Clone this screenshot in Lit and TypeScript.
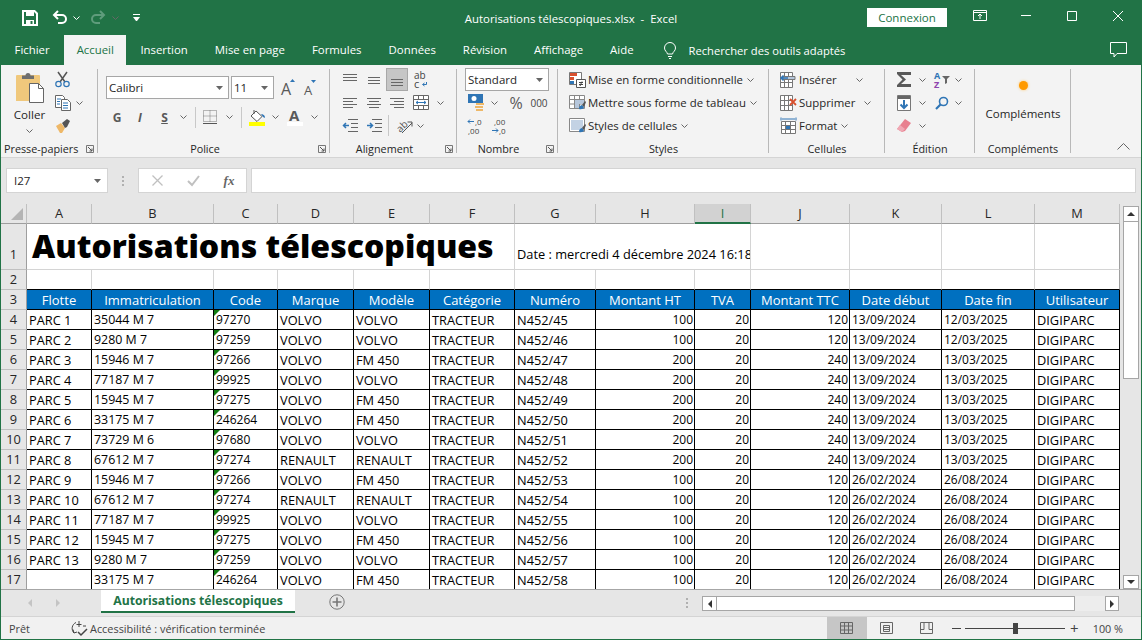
import { LitElement, html, css, svg } from 'lit';
import { customElement } from 'lit/decorators.js';

const caret = html`<svg class="ico" width="7" height="4" viewBox="0 0 7 4"><path d="M.5.5l3 3 3-3" fill="none" stroke="#666"/></svg>`;
const drop = html`<svg class="ico" width="7" height="4" viewBox="0 0 7 4"><path d="M0 0h7L3.5 4z" fill="#666"/></svg>`;
const launcher = html`<svg class="launch" width="8" height="8" viewBox="0 0 8 8"><path d="M.5 7.5v-7h7v7z" fill="none" stroke="#777"/><path d="M2 2l4 4M6 3.5V6H3.5" fill="none" stroke="#555"/></svg>`;

const lines = (ys: number[][]) => html`<svg class="ico" width="16" height="14" viewBox="0 0 16 14">
    ${ys.map(([y, a, b]) => svg`<path d="M${a} ${y + 0.5}H${b}" stroke="#666"/>`)}
</svg>`;

const gridIcon = (accent: unknown) => html`<svg class="ico" width="17" height="17" viewBox="0 0 17 17">
    <path d="M.5 1.500h12v15H.5zM.5 6.500h12M.5 11.500h12M4.500 1.500v15M8.500 1.500v15" fill="#fff" stroke="#777"/>${accent}
</svg>`;

const saveIcon = html`<svg class="ico" width="16" height="16" viewBox="0 0 16 16"><path d="M1 1h11.500L15 3.500V15H1z" fill="none" stroke="#fff" stroke-width="2"/><path d="M4 1h8v5H4zM4 10h8v5H4z" fill="#fff"/><path d="M8.500 11h2v3h-2z" fill="#217346"/></svg>`;
const undoIcon = (c: string) => html`<svg class="ico" width="16" height="15" viewBox="0 0 16 15"><path d="M6 1L2 5l4 4M2 5h8a4 4 0 0 1 0 8H6" fill="none" stroke="${c}" stroke-width="2"/></svg>`;
const redoIcon = (c: string) => html`<svg class="ico" width="16" height="15" viewBox="0 0 16 15"><path d="M10 1l4 4-4 4M14 5H6a4 4 0 0 0 0 8h4" fill="none" stroke="${c}" stroke-width="2"/></svg>`;

const clipboard = html`<svg class="ico" width="29" height="31" viewBox="0 0 29 31">
    <path d="M2 3h22a1 1 0 0 1 1 1v25H1V4a1 1 0 0 1 1-1z" fill="#f0c87c"/>
    <path d="M7 7V3.500h3.500a2.500 2.500 0 0 1 5 0H19V7z" fill="#6e6e6e"/>
    <path d="M14.500 11.500h9l5 5v14h-14z" fill="#fff" stroke="#666"/><path d="M23.500 11.500v5h5" fill="none" stroke="#666"/>
</svg>`;
const scissors = html`<svg class="ico" width="15" height="17" viewBox="0 0 15 17">
    <path d="M3 1l7 10M12 1L5 11" stroke="#555" stroke-width="1.500"/>
    <circle cx="3.500" cy="13" r="2.700" fill="none" stroke="#2f75b5" stroke-width="1.200"/><circle cx="11.500" cy="13" r="2.700" fill="none" stroke="#2f75b5" stroke-width="1.200"/>
</svg>`;
const copyIcon = html`<svg class="ico" width="16" height="16" viewBox="0 0 16 16">
    <path d="M.5.5h7l2 2v10h-9z" fill="#fff" stroke="#666"/><path d="M6.500 4.500h6l3 3v8h-9z" fill="#fff" stroke="#666"/>
    <path d="M2 4h4M2 6.500h3M2 9h3M8 8h5M8 10.500h5M8 13h5" stroke="#2f75b5"/>
</svg>`;
const brush = html`<svg class="ico" width="16" height="15" viewBox="0 0 16 15">
    <path d="M1 8l5-3 4 5-3 5H5z" fill="#eeb868"/><path d="M7 5l5-4 3 2-3 6-2 1z" fill="#555"/>
</svg>`;
const growIcon = html`<svg class="ico" width="15" height="18" viewBox="0 0 15 18"><path d="M9 3h5L11.500 0z" fill="#2f75b5"/><text x="0" y="16" font-size="16" fill="#595959" font-family="Open Sans">A</text></svg>`;
const shrinkIcon = html`<svg class="ico" width="14" height="16" viewBox="0 0 14 16"><path d="M7 0h5L9.500 3z" fill="#2f75b5"/><text x="0" y="15" font-size="13" fill="#595959" font-family="Open Sans">A</text></svg>`;
const bordersIcon = html`<svg class="ico" width="14" height="14" viewBox="0 0 14 14"><path d="M.5.5h13v11H.5zM7 .5v11M.5 6h13" fill="none" stroke="#777" stroke-dasharray="1 1"/><path d="M0 13.500h14" stroke="#555"/></svg>`;
const fillIcon = html`<svg class="ico" width="17" height="17" viewBox="0 0 17 17">
    <path d="M7 2l6 5.500-5 5-6-5.500z" fill="#fff" stroke="#555"/><path d="M5 1v4" stroke="#555"/><path d="M12 5c2 0 4 1 4 4l-2-1z" fill="#2f75b5"/>
    <path d="M0 13h16v4H0z" fill="#ffff00"/>
</svg>`;
const colorIcon = html`<svg class="ico" width="16" height="17" viewBox="0 0 16 17"><text x="2" y="12" font-size="15" font-weight="700" fill="#595959" font-family="Open Sans">A</text><path d="M0 13h16v4H0z" fill="#fff"/></svg>`;
const wrapIcon = html`<svg class="ico" width="14" height="18" viewBox="0 0 14 18"><text x="0" y="8" font-size="10" fill="#444" font-family="Open Sans">ab</text><text x="0" y="17" font-size="11" fill="#444" font-family="Open Sans">c</text><path d="M12.500 11v2.500H9M10.500 12l-2 1.500 2 1.500" fill="none" stroke="#2f75b5"/></svg>`;
const mergeIcon = html`<svg class="ico" width="16" height="15" viewBox="0 0 16 15"><path d="M.5.5h15v14H.5zM.5 4.500h15M.5 10.500h15M5.500.5v4M10.500.5v4M5.500 10.500v4M10.500 10.500v4" fill="#fff" stroke="#666"/><path d="M3 7.500h10M5 6l-2 1.500L5 9M11 6l2 1.500L11 9" fill="none" stroke="#2f75b5"/></svg>`;
const outdentIcon = html`<svg class="ico" width="16" height="14" viewBox="0 0 16 14"><path d="M6 .5h10M9 4.500h7M9 8.500h7M6 12.500h10" stroke="#666"/><path d="M7 6.500H2M4 4L1.500 6.500 4 9" fill="none" stroke="#2f75b5" stroke-width="1.500"/></svg>`;
const indentIcon = html`<svg class="ico" width="16" height="14" viewBox="0 0 16 14"><path d="M6 .5h10M9 4.500h7M9 8.500h7M6 12.500h10" stroke="#666"/><path d="M1 6.500h5M4 4l2.500 2.500L4 9" fill="none" stroke="#2f75b5" stroke-width="1.500"/></svg>`;
const orientIcon = html`<svg class="ico" width="17" height="16" viewBox="0 0 17 16"><text x="1" y="13" font-size="10" fill="#555" font-family="Open Sans" transform="rotate(-45 5 10)">ab</text><path d="M6 15L16 5M11.500 4H16v4.500" fill="none" stroke="#555"/></svg>`;
const currencyIcon = html`<svg class="ico" width="17" height="17" viewBox="0 0 17 17">
    <path d="M0 0h15v9H0z" fill="#2f75b5"/><circle cx="6" cy="4.500" r="2.500" fill="#fff"/>
    <path d="M8 9h8v2H8zM7 12h8v2H7zM8 15h7v2H8z" fill="#eeb868"/>
</svg>`;
const incDecimals = html`<svg class="ico" width="16" height="16" viewBox="0 0 16 16"><path d="M7 3.500H1M3 1.500l-2 2 2 2" fill="none" stroke="#2f75b5"/><text x="8" y="7" font-size="8" fill="#444" font-family="Open Sans">,0</text><text x="1" y="15.500" font-size="8" fill="#444" font-family="Open Sans">,00</text></svg>`;
const decDecimals = html`<svg class="ico" width="16" height="16" viewBox="0 0 16 16"><text x="3" y="7" font-size="8" fill="#444" font-family="Open Sans">,00</text><path d="M1 12.500h6M5 10.500l2 2-2 2" fill="none" stroke="#2f75b5"/><text x="8" y="15.500" font-size="8" fill="#444" font-family="Open Sans">,0</text></svg>`;

const condIcon = html`<svg class="ico" width="17" height="16" viewBox="0 0 17 16">
    <path d="M.5.500h12v12H.5z" fill="#fff" stroke="#777"/><path d="M1 1h7v3H1z" fill="#d9502e"/><path d="M1 5h4v3H1z" fill="#d9502e"/><path d="M1 9h4v3H1z" fill="#2f75b5"/>
    <path d="M7.500 7.500h9v8h-9z" fill="#fff" stroke="#555"/><path d="M10 10.500h4M10 12.500h4M13 9.500l-2 4.500" fill="none" stroke="#444"/>
</svg>`;
const brushMark = svg`<path d="M10 14c0-3 2-4 3-4l2 2c0 1-2 3-5 2z" fill="#2f75b5"/><path d="M13 10l3-4 1 1-2 5z" fill="#555"/>`;
const tableIcon = html`<svg class="ico" width="17" height="16" viewBox="0 0 17 16">
    <path d="M.5.500h15v13H.5zM.5 4.500h15M.5 9h15M5.500.5v13M10.500.5v13" fill="#fff" stroke="#888"/><path d="M6 5h9v4H6zM6 9h4v4H6z" fill="#b6c7dc"/>${brushMark}
</svg>`;
const cellStyleIcon = html`<svg class="ico" width="17" height="16" viewBox="0 0 17 16">
    <path d="M.5.500h15v13H.5z" fill="#fff" stroke="#888"/><path d="M2 2h12v10H2z" fill="#c3d2e4"/>${brushMark}
</svg>`;
const insertCells = gridIcon(svg`<path d="M3 5.500h12v3H3z" fill="#b6c7dc" stroke="#777"/><path d="M8 7H1M3.500 4.500L1 7l2.500 2.500" fill="none" stroke="#2f75b5" stroke-width="1.500"/>`);
const deleteCells = gridIcon(svg`<path d="M10 5l6 6M16 5l-6 6" stroke="#d9502e" stroke-width="1.800"/>`);
const formatCells = html`<svg class="ico" width="17" height="17" viewBox="0 0 17 17">
    <path d="M1.500 4.500h14v12h-14zM1.500 8.500h14M1.500 12.500h14M5.500 4.500v12M10.500 4.500v12" fill="#fff" stroke="#777"/><path d="M6 9h4v3H6z" fill="#2f75b5"/>
    <path d="M1 .5v3M16 .5v3M2 2h13" stroke="#2f75b5"/>
</svg>`;
const sigma = html`<svg class="ico" width="16" height="15" viewBox="0 0 16 15"><path d="M1 0h14v3L5 3l5 4.500L5 12h10v3H1v-2l5.500-5.500L1 2z" fill="#595959"/></svg>`;
const sortIcon = html`<svg class="ico" width="16" height="18" viewBox="0 0 16 18"><text x="0" y="8" font-size="9" font-weight="700" fill="#2f75b5" font-family="Open Sans">A</text><text x="0" y="17" font-size="9" font-weight="700" fill="#8e44ad" font-family="Open Sans">Z</text><path d="M8 5h8l-3 3v4l-2 1V8z" fill="#666"/></svg>`;
const downFill = html`<svg class="ico" width="14" height="16" viewBox="0 0 14 16"><path d="M.5.500h13v15H.5z" fill="#fff" stroke="#777"/><path d="M1 1h12v3H1z" fill="#666"/><path d="M7 5v8M3.500 9.500L7 13l3.500-3.500" fill="none" stroke="#2f75b5" stroke-width="2"/></svg>`;
const searchIcon = html`<svg class="ico" width="14" height="14" viewBox="0 0 14 14"><circle cx="8.500" cy="5.500" r="4" fill="none" stroke="#2f75b5" stroke-width="1.600"/><path d="M5.500 8.500L1 13" stroke="#2f75b5" stroke-width="2.200"/></svg>`;
const eraser = html`<svg class="ico" width="14" height="13" viewBox="0 0 14 13"><path d="M8 0l6 4-6 8-3 1-5-3z" fill="#e8808f"/><path d="M0 10l3-4 5 4-3 3z" fill="#f0a8b4"/></svg>`;

const bulb = html`<svg class="ico" width="14" height="17" viewBox="0 0 14 17"><path d="M4.500 12C4 9.500 1.500 9 1.500 6a5.500 5.500 0 0 1 11 0c0 3-2.500 3.500-3 6zM5 14.500h4M6 16.500h2" fill="none" stroke="#fff"/></svg>`;
const comment = html`<svg class="ico" width="17" height="16" viewBox="0 0 17 16"><path d="M.5.500h16v11H7L4 15v-3.500H.5z" fill="none" stroke="#fff"/></svg>`;
const restore = html`<svg class="ico" width="14" height="11" viewBox="0 0 14 11"><path d="M.5.500h13v10H.5zM.5 2.500h13" fill="none" stroke="#fff"/><path d="M7 9V4M5 6l2-2 2 2" fill="none" stroke="#fff"/></svg>`;
const minimize = html`<svg class="ico" width="10" height="1" viewBox="0 0 10 1"><path d="M0 .5h10" stroke="#fff"/></svg>`;
const maximize = html`<svg class="ico" width="10" height="10" viewBox="0 0 10 10"><path d="M.5.500h9v9h-9z" fill="none" stroke="#fff"/></svg>`;
const closeIcon = html`<svg class="ico" width="10" height="10" viewBox="0 0 10 10"><path d="M0 0l10 10M10 0L0 10" stroke="#fff"/></svg>`;
const cross = html`<svg class="ico" width="11" height="11" viewBox="0 0 11 11"><path d="M.5.5l10 10M10.500.5l-10 10" stroke="#c0c0c0" stroke-width="1.300"/></svg>`;
const check = html`<svg class="ico" width="13" height="11" viewBox="0 0 13 11"><path d="M1 6l4 4 7-9" fill="none" stroke="#c0c0c0" stroke-width="2"/></svg>`;
const plusCircle = html`<svg class="ico" width="16" height="16" viewBox="0 0 16 16"><circle cx="8" cy="8" r="7.200" fill="none" stroke="#777"/><path d="M8 3.500v9M3.500 8h9" stroke="#777" stroke-width="1.600"/></svg>`;
const a11y = html`<svg class="ico" width="17" height="17" viewBox="0 0 17 17"><path d="M5 2.500A6.500 6.500 0 0 0 3 13M2 9.500L3 13l3-1" fill="none" stroke="#444"/><path d="M8 1v6M5.500 4.500h5M12 6l3 0" stroke="#444"/><path d="M7 12l3 3 6-6" fill="none" stroke="#444" stroke-width="1.500"/></svg>`;
const normalView = html`<svg class="ico" width="13" height="12" viewBox="0 0 13 12"><path d="M.5.500h12v11H.5zM.5 4h12M.5 8h12M4.500.5v11M8.500.5v11" fill="none" stroke="#666"/></svg>`;
const pageView = html`<svg class="ico" width="13" height="12" viewBox="0 0 13 12"><path d="M.5.500h12v11H.5z" fill="none" stroke="#666"/><path d="M3.500 3.500h6v6h-6zM4 5.500h5M4 7.500h5" fill="none" stroke="#666"/></svg>`;
const breakView = html`<svg class="ico" width="13" height="12" viewBox="0 0 13 12"><path d="M.5.500h12v11H.5zM.5 7.500h3.500V.5M9 .5v7h3.500" fill="none" stroke="#666"/></svg>`;

const COLS = ['A', 'B', 'C', 'D', 'E', 'F', 'G', 'H', 'I', 'J', 'K', 'L', 'M'];
const HEAD = ['Flotte', 'Immatriculation', 'Code', 'Marque', 'Modèle', 'Catégorie', 'Numéro', 'Montant HT', 'TVA', 'Montant TTC', 'Date début', 'Date fin', 'Utilisateur'];
const A = ['13/09/2024', '12/03/2025'];
const B = ['13/09/2024', '13/03/2025'];
const C = ['26/02/2024', '26/08/2024'];
// flotte, immat, code, marque, modele, ht, ttc, dates
const ROWS: [string, string, string, string, string, number, number, string[]][] = [
    ['PARC 1', '35044 M 7', '97270', 'VOLVO', 'VOLVO', 100, 120, A],
    ['PARC 2', '9280 M 7', '97259', 'VOLVO', 'VOLVO', 100, 120, A],
    ['PARC 3', '15946 M 7', '97266', 'VOLVO', 'FM 450', 200, 240, B],
    ['PARC 4', '77187 M 7', '99925', 'VOLVO', 'VOLVO', 200, 240, B],
    ['PARC 5', '15945 M 7', '97275', 'VOLVO', 'FM 450', 200, 240, B],
    ['PARC 6', '33175 M 7', '246264', 'VOLVO', 'FM 450', 200, 240, B],
    ['PARC 7', '73729 M 6', '97680', 'VOLVO', 'VOLVO', 200, 240, B],
    ['PARC 8', '67612 M 7', '97274', 'RENAULT', 'RENAULT', 200, 240, B],
    ['PARC 9', '15946 M 7', '97266', 'VOLVO', 'FM 450', 100, 120, C],
    ['PARC 10', '67612 M 7', '97274', 'RENAULT', 'RENAULT', 100, 120, C],
    ['PARC 11', '77187 M 7', '99925', 'VOLVO', 'VOLVO', 100, 120, C],
    ['PARC 12', '15945 M 7', '97275', 'VOLVO', 'FM 450', 100, 120, C],
    ['PARC 13', '9280 M 7', '97259', 'VOLVO', 'VOLVO', 100, 120, C],
    ['', '33175 M 7', '246264', 'VOLVO', 'FM 450', 100, 120, C],
];

@customElement('app-root')
export class AppRoot extends LitElement {
    static override styles = css`
        :host {
            display: block;
            width: 1142px;
            height: 640px;
            overflow: hidden;
            font-family: 'Open Sans', 'Liberation Sans', sans-serif;
            color: #262626;
        }
        .app {
            box-sizing: border-box;
            width: 1142px;
            height: 640px;
            border: 1px solid #217346;
            border-top: 0;
            background: #e6e6e6;
            display: flex;
            flex-direction: column;
        }
        .ico {
            display: block;
            flex: none;
            overflow: visible;
        }

        .titlebar {
            height: 35px;
            background: #217346;
            color: #fff;
            display: grid;
            grid-template-columns: 1fr auto 1fr;
            align-items: center;
            font-size: 11.4px;
        }
        .qat {
            display: grid;
            grid-template-columns: 16px 14px 16px 16px 28px 6px 36px;
            justify-items: center;
            align-items: center;
            padding-left: 21px;
        }
        .qat .wcaret path {
            stroke: #fff;
        }
        .custom {
            width: 7px;
            height: 7px;
            border-top: 1px solid #fff;
            box-sizing: border-box;
        }
        .custom::after {
            content: '';
            display: block;
            margin-top: 2px;
            border: 3.5px solid transparent;
            border-top: 4px solid #fff;
            border-bottom: 0;
        }
        .title {
            white-space: pre;
            padding-top: 1px;
        }
        .win {
            display: flex;
            justify-content: flex-end;
            align-items: center;
        }
        .login {
            width: 80px;
            height: 19px;
            background: #fff;
            color: #217346;
            font-size: 11.5px;
            line-height: 19px;
            text-align: center;
            margin-right: 10px;
        }
        .wbtn {
            width: 46px;
            height: 35px;
            display: flex;
            align-items: center;
            justify-content: center;
            padding-bottom: 4px;
            box-sizing: border-box;
        }

        .tabs {
            height: 30px;
            background: #217346;
            color: #fff;
            display: flex;
            align-items: stretch;
            font-size: 11.4px;
        }
        .tab {
            padding: 0 13.5px;
            line-height: 30px;
            white-space: nowrap;
        }
        .tab.on {
            background: #f3f3f3;
            color: #217346;
            padding: 0 12.5px;
            margin: 0 0.5px 0 1px;
        }
        .tell {
            display: flex;
            align-items: center;
            gap: 12px;
            margin-left: 15.5px;
            white-space: nowrap;
            font-size: 11.2px;
        }
        .feedback {
            margin-left: auto;
            padding-right: 14px;
            align-self: center;
        }

        .ribbon {
            height: 93px;
            box-sizing: border-box;
            background: #f3f3f3;
            border-bottom: 1px solid #d4d4d4;
            display: flex;
            padding-top: 3px;
            font-size: 11.4px;
        }
        .group {
            position: relative;
            box-sizing: border-box;
            height: 88px;
            flex: none;
            display: flex;
            flex-direction: column;
        }
        .group::after {
            content: '';
            position: absolute;
            right: 0;
            top: 1px;
            bottom: 3px;
            width: 1px;
            background: #b8b8b8;
        }
        .body {
            height: 73px;
        }
        .glabel {
            position: relative;
            box-sizing: border-box;
            height: 15px;
            line-height: 15px;
            text-align: center;
            font-size: 10.8px;
        }
        .glabel.tool {
            padding-right: 18px;
        }
        .launch {
            position: absolute;
            right: 4px;
            top: 4px;
        }
        .g-clip { width: 97px; }
        .g-font { width: 232px; }
        .g-align { width: 127px; }
        .g-num { width: 101px; }
        .g-styles { width: 211px; }
        .g-cells { width: 116px; }
        .g-edit { width: 90px; }
        .g-addin { width: 96px; }
        .g-clip .glabel {
            text-align: left;
            padding-left: 3px;
        }

        .g-clip .body {
            display: grid;
            grid-template-columns: 52px 44px;
        }
        .paste {
            display: flex;
            flex-direction: column;
            align-items: center;
            padding: 4px 0 0 5px;
        }
        .paste span {
            margin-top: 3px;
            line-height: 18px;
            font-size: 11.6px;
        }
        .paste .ico:last-child {
            margin-top: 5px;
        }
        .stack {
            display: grid;
            grid-auto-rows: 23px;
            align-items: center;
        }
        .clip-row {
            display: flex;
            align-items: center;
            gap: 5px;
            padding-left: 2px;
        }

        .font-top {
            display: grid;
            grid-template-columns: 123px 45px 28px 18px;
            align-items: center;
            justify-items: center;
            margin: 8px 0 0 8px;
        }
        .box {
            box-sizing: border-box;
            height: 23px;
            background: #fff;
            border: 1px solid #a6a6a6;
            display: flex;
            align-items: center;
            justify-content: space-between;
            padding: 0 5px 0 2px;
            font-size: 11.5px;
            width: 100%;
        }
        .box.size {
            width: 43px;
            justify-self: end;
        }
        .font-bottom {
            display: grid;
            grid-template-columns: 22px 24px 25px 12px 12px 18px 20px 4px 28px 8px 32px 6px;
            align-items: center;
            justify-items: center;
            height: 22px;
            margin: 7px 0 0 8px;
        }
        .glyph {
            font-size: 12px;
            font-weight: 700;
            color: #595959;
        }
        .glyph.it {
            font-style: italic;
        }
        .glyph.ul {
            text-decoration: underline;
        }
        .vsep {
            width: 1px;
            height: 21px;
            background: #c8c8c8;
        }

        .g-align .body,
        .g-num .body,
        .g-edit .body {
            display: grid;
            grid-auto-rows: 23px;
        }
        .a-row {
            display: grid;
            grid-template-columns: 24px 23px 24px 24px 14px;
            align-items: center;
            justify-items: center;
            padding-left: 8px;
        }
        .a-row.third {
            grid-template-columns: 24px 23px 6px 26px 6px;
        }
        .pressed {
            width: 22px;
            height: 23px;
            box-sizing: border-box;
            background: #c6c6c6;
            border: 1px solid #a8a8a8;
            display: flex;
            align-items: center;
            justify-content: center;
        }

        .num-box {
            width: 84px;
            margin-left: 8px;
            font-size: 11.5px;
        }
        .n-row {
            display: grid;
            grid-template-columns: 22px 14px 30px 16px;
            align-items: center;
            justify-items: center;
            padding-left: 8px;
        }
        .n-row.third {
            grid-template-columns: 20px 28px;
        }
        .percent {
            font-size: 16px;
            color: #595959;
        }
        .thousands {
            font-size: 10px;
            color: #444;
        }

        .list {
            display: grid;
            grid-auto-rows: 23px;
            padding: 0 0 0 11px;
        }
        .list-row {
            display: flex;
            align-items: center;
            white-space: nowrap;
        }
        .list-row span {
            margin: 0 4px 0 2px;
        }
        .g-cells .c-ins span { margin-right: 19px; }
        .g-cells .c-del span { margin-right: 9px; }

        .e-row {
            display: grid;
            grid-template-columns: 22px 14px 26px 6px;
            align-items: center;
            justify-items: center;
            padding-left: 8px;
        }

        .g-addin .body {
            display: flex;
            flex-direction: column;
            align-items: center;
            padding-top: 13px;
            box-sizing: border-box;
        }
        .dot {
            width: 9px;
            height: 9px;
            border-radius: 50%;
            background: #ff9a00;
            box-shadow: 0 0 3px #ffc870;
        }
        .g-addin .body span {
            margin-top: 16px;
            line-height: 16px;
            font-size: 11.5px;
        }
        .collapse {
            flex: 1;
            display: flex;
            justify-content: flex-end;
            align-items: flex-end;
            padding: 0 11px 7px 0;
        }

        .fbar {
            height: 46px;
            box-sizing: border-box;
            display: flex;
            align-items: flex-start;
            padding: 10px 5px 0 5px;
            font-size: 11.5px;
        }
        .namebox {
            box-sizing: border-box;
            width: 102px;
            height: 25px;
            background: #fff;
            border: 1px solid #d4d4d4;
            display: flex;
            align-items: center;
            justify-content: space-between;
            padding: 0 6px 0 7px;
        }
        .grip {
            width: 30px;
            height: 25px;
            display: flex;
            flex-direction: column;
            align-items: center;
            justify-content: center;
            gap: 2px;
        }
        .grip i {
            width: 2px;
            height: 2px;
            background: #b0b0b0;
        }
        .fbtns {
            box-sizing: border-box;
            width: 109px;
            height: 25px;
            background: #fff;
            border: 1px solid #d4d4d4;
            display: grid;
            grid-template-columns: 36px 36px 36px;
            align-items: center;
            justify-items: center;
            margin-right: 4px;
        }
        .fx {
            font-family: 'Liberation Serif', serif;
            font-style: italic;
            font-size: 13px;
            font-weight: 700;
            color: #666;
        }
        .finput {
            flex: 1;
            height: 25px;
            box-sizing: border-box;
            background: #fff;
            border: 1px solid #d4d4d4;
        }

        .main {
            height: 385px;
            display: flex;
            overflow: hidden;
        }
        .sheet {
            display: grid;
            grid-template-columns: 26px 65px 122px 64px 76px 76px 85px 81px 99px 56px 99px 92px 93px 85px;
            grid-template-rows: 20px 46px;
            grid-auto-rows: 20px;
            font-size: 12.8px;
            color: #000;
            flex: none;
        }
        .corner {
            box-sizing: border-box;
            border-right: 1px solid #c0c0c0;
            border-bottom: 1px solid #9e9e9e;
            display: flex;
            align-items: flex-end;
            justify-content: flex-end;
            padding: 0 3px 3px 0;
        }
        .corner::after {
            content: '';
            border-style: solid;
            border-width: 0 0 12px 12px;
            border-color: transparent transparent #b4b4b4 transparent;
        }
        .ch {
            box-sizing: border-box;
            border-right: 1px solid #c0c0c0;
            border-bottom: 1px solid #9e9e9e;
            text-align: center;
            line-height: 19px;
            color: #262626;
        }
        .ch.sel {
            background: #d2d2d2;
            color: #217346;
            border-bottom: 2px solid #217346;
        }
        .rh {
            box-sizing: border-box;
            border-right: 1px solid #9e9e9e;
            border-bottom: 1px solid #c0c0c0;
            text-align: center;
            color: #262626;
            display: flex;
            align-items: flex-end;
            justify-content: center;
            line-height: 19px;
        }
        .rh.tall {
            padding-bottom: 5px;
        }
        .plain {
            box-sizing: border-box;
            background: #fff;
            border-right: 1px solid #d4d4d4;
            border-bottom: 1px solid #d4d4d4;
        }
        .plain.last {
            border-right-color: #9e9e9e;
        }
        .plain.black {
            border-bottom-color: #000;
        }
        .big {
            grid-column: span 6;
            font-size: 32px;
            font-weight: 800;
            line-height: 44px;
            padding-left: 5px;
            white-space: nowrap;
            overflow: hidden;
        }
        .date {
            grid-column: span 3;
            white-space: nowrap;
            overflow: hidden;
            padding: 21px 0 0 2px;
            line-height: 18px;
        }
        .th {
            box-sizing: border-box;
            background: #0070c0;
            color: #fff;
            border-right: 1px solid #000;
            border-bottom: 1px solid #000;
            text-align: center;
            font-size: 13px;
            line-height: 20px;
            white-space: nowrap;
            overflow: hidden;
        }
        .td {
            position: relative;
            box-sizing: border-box;
            background: #fff;
            border-right: 1px solid #000;
            border-bottom: 1px solid #000;
            padding: 0 2px;
            line-height: 20px;
            white-space: nowrap;
            overflow: hidden;
        }
        .td.d {
            font-size: 12px;
        }
        .td.m {
            font-size: 12.4px;
        }
        .td.num {
            font-size: 12px;
            text-align: right;
            padding-right: 1px;
        }
        .td.flag::before {
            content: '';
            position: absolute;
            left: 0;
            top: 0;
            border-style: solid;
            border-width: 6px 6px 0 0;
            border-color: #107c10 transparent transparent transparent;
        }

        .vscroll {
            flex: 1;
            display: flex;
            flex-direction: column;
            padding: 2px 0 0 3px;
            box-sizing: border-box;
        }
        .sbtn {
            box-sizing: border-box;
            width: 16px;
            height: 16px;
            flex: none;
            background: #fff;
            border: 1px solid #a6a6a6;
            display: flex;
            align-items: center;
            justify-content: center;
        }
        .sbtn.down {
            margin-top: auto;
            height: 14px;
        }
        .tri {
            width: 0;
            height: 0;
            border: 4px solid transparent;
        }
        .tri.u { border-top: 0; border-bottom: 4px solid #333; }
        .tri.d { border-bottom: 0; border-top: 4px solid #333; }
        .tri.l { border-left: 0; border-right: 4px solid #333; }
        .tri.r { border-right: 0; border-left: 4px solid #333; }
        .vthumb {
            box-sizing: border-box;
            width: 16px;
            height: 157px;
            background: #fff;
            border: 1px solid #a6a6a6;
            border-top: 0;
        }

        .tabbar {
            height: 28px;
            box-sizing: border-box;
            border-top: 1px solid #a6a6a6;
            border-bottom: 1px solid #d4d4d4;
            display: flex;
            align-items: flex-start;
        }
        .nav {
            width: 100px;
            height: 26px;
            display: grid;
            grid-template-columns: 28px 28px;
            padding-left: 15px;
            box-sizing: border-box;
            align-items: center;
            justify-items: center;
        }
        .nav .tri.l { border-right-color: #c4c4c4; }
        .nav .tri.r { border-left-color: #c4c4c4; }
        .sheet-tab {
            box-sizing: border-box;
            width: 194px;
            height: 23px;
            background: #fff;
            border-bottom: 2px solid #217346;
            color: #217346;
            font-size: 12.2px;
            font-weight: 700;
            text-align: center;
            line-height: 22px;
        }
        .add {
            margin: 4px 0 0 34px;
        }
        .grip.h {
            width: 14px;
            margin-left: 335px;
        }
        .hscroll {
            display: grid;
            grid-template-columns: 15px 358px 30px 14px;
            height: 15px;
            margin: 6px 0 0 8px;
        }
        .hscroll .sbtn {
            width: auto;
            height: 15px;
        }
        .hthumb {
            box-sizing: border-box;
            background: #fff;
            border: 1px solid #a6a6a6;
            border-left: 0;
        }
        .htrack {
            background: #ededed;
        }

        .status {
            flex: 1;
            background: #f1f1f1;
            display: flex;
            align-items: center;
            font-size: 10.9px;
            color: #444;
        }
        .ready {
            width: 70px;
            padding-left: 8px;
            box-sizing: border-box;
        }
        .acc {
            display: flex;
            align-items: center;
            gap: 2px;
        }
        .views {
            margin-left: auto;
            display: flex;
            align-items: center;
            align-self: stretch;
            padding-right: 18px;
        }
        .view {
            width: 40px;
            align-self: stretch;
            display: flex;
            align-items: center;
            justify-content: center;
        }
        .view.on {
            background: #c6c6c6;
        }
        .zoom-sign {
            width: 9px;
            height: 1px;
            background: #444;
            margin: 0 4px 0 5px;
        }
        .zoom-plus {
            font-size: 15px;
            line-height: 15px;
            margin: 0 0 0 4px;
            width: 11px;
            text-align: center;
        }
        .slider {
            position: relative;
            width: 100px;
            height: 1px;
            background: #444;
        }
        .slider::after {
            content: '';
            position: absolute;
            left: 48px;
            top: -5px;
            width: 5px;
            height: 11px;
            background: #444;
        }
        .pct {
            margin-left: 13px;
            font-size: 10.8px;
        }
    `;

    private sheet() {
        return html`<div class="sheet">
            <div class="corner"></div>
            ${COLS.map((c) => html`<div class="ch ${c === 'I' ? 'sel' : ''}">${c}</div>`)}

            <div class="rh tall">1</div>
            <div class="plain big">Autorisations télescopiques</div>
            <div class="plain date">Date : mercredi 4 décembre 2024 16:18</div>
            <div class="plain"></div>
            <div class="plain"></div>
            <div class="plain"></div>
            <div class="plain last"></div>

            <div class="rh">2</div>
            ${COLS.map((c) => html`<div class="plain black ${c === 'M' ? 'last' : ''}"></div>`)}

            <div class="rh">3</div>
            ${HEAD.map((h) => html`<div class="th">${h}</div>`)}

            ${ROWS.map(
                (r, i) => html`
                    <div class="rh">${i + 4}</div>
                    <div class="td">${r[0]}</div>
                    <div class="td m">${r[1]}</div>
                    <div class="td d flag">${r[2]}</div>
                    <div class="td">${r[3]}</div>
                    <div class="td">${r[4]}</div>
                    <div class="td">TRACTEUR</div>
                    <div class="td">N452/${45 + i}</div>
                    <div class="td num">${r[5]}</div>
                    <div class="td num">20</div>
                    <div class="td num">${r[6]}</div>
                    <div class="td d">${r[7][0]}</div>
                    <div class="td d">${r[7][1]}</div>
                    <div class="td">DIGIPARC</div>
                `,
            )}
        </div>`;
    }

    private ribbon() {
        const alignTop = lines([[1, 1, 15], [4, 1, 15], [7, 1, 15]]);
        return html`<div class="ribbon">
            <div class="group g-clip">
                <div class="body">
                    <div class="paste">${clipboard}<span>Coller</span>${caret}</div>
                    <div class="stack">
                        <div class="clip-row">${scissors}</div>
                        <div class="clip-row">${copyIcon}${caret}</div>
                        <div class="clip-row">${brush}</div>
                    </div>
                </div>
                <div class="glabel">Presse-papiers${launcher}</div>
            </div>
            <div class="group g-font">
                <div class="body">
                    <div class="font-top">
                        <div class="box"><span>Calibri</span>${drop}</div>
                        <div class="box size"><span>11</span>${drop}</div>
                        ${growIcon}${shrinkIcon}
                    </div>
                    <div class="font-bottom">
                        <span class="glyph">G</span>
                        <span class="glyph it">I</span>
                        <span class="glyph ul">S</span>
                        ${caret}
                        <div class="vsep"></div>
                        ${bordersIcon}${caret}
                        <div class="vsep"></div>
                        ${fillIcon}${caret}${colorIcon}${caret}
                    </div>
                </div>
                <div class="glabel tool">Police${launcher}</div>
            </div>
            <div class="group g-align">
                <div class="body">
                    <div class="a-row">
                        ${alignTop}
                        ${lines([[4, 2, 14], [7, 2, 14], [10, 2, 14]])}
                        <div class="pressed">${lines([[6, 2, 14], [9, 2, 14], [12, 2, 14]])}</div>
                        ${wrapIcon}
                    </div>
                    <div class="a-row">
                        ${lines([[2, 1, 15], [5, 1, 11], [8, 1, 15], [11, 1, 11]])}
                        ${lines([[2, 1, 15], [5, 3, 13], [8, 1, 15], [11, 3, 13]])}
                        ${lines([[2, 1, 15], [5, 5, 15], [8, 1, 15], [11, 5, 15]])}
                        ${mergeIcon}${caret}
                    </div>
                    <div class="a-row third">
                        ${outdentIcon}${indentIcon}
                        <div class="vsep"></div>
                        ${orientIcon}${caret}
                    </div>
                </div>
                <div class="glabel tool">Alignement${launcher}</div>
            </div>
            <div class="group g-num">
                <div class="body">
                    <div class="box num-box"><span>Standard</span>${drop}</div>
                    <div class="n-row">
                        ${currencyIcon}${caret}
                        <span class="percent">%</span>
                        <span class="thousands">000</span>
                    </div>
                    <div class="n-row third">${incDecimals}${decDecimals}</div>
                </div>
                <div class="glabel tool">Nombre${launcher}</div>
            </div>
            <div class="group g-styles">
                <div class="body list">
                    <div class="list-row">${condIcon}<span>Mise en forme conditionnelle</span>${caret}</div>
                    <div class="list-row">${tableIcon}<span>Mettre sous forme de tableau</span>${caret}</div>
                    <div class="list-row">${cellStyleIcon}<span>Styles de cellules</span>${caret}</div>
                </div>
                <div class="glabel">Styles</div>
            </div>
            <div class="group g-cells">
                <div class="body list">
                    <div class="list-row c-ins">${insertCells}<span>Insérer</span>${caret}</div>
                    <div class="list-row c-del">${deleteCells}<span>Supprimer</span>${caret}</div>
                    <div class="list-row">${formatCells}<span>Format</span>${caret}</div>
                </div>
                <div class="glabel">Cellules</div>
            </div>
            <div class="group g-edit">
                <div class="body">
                    <div class="e-row">${sigma}${caret}${sortIcon}${caret}</div>
                    <div class="e-row">${downFill}${caret}${searchIcon}${caret}</div>
                    <div class="e-row">${eraser}${caret}</div>
                </div>
                <div class="glabel">Édition</div>
            </div>
            <div class="group g-addin">
                <div class="body"><div class="dot"></div><span>Compléments</span></div>
                <div class="glabel">Compléments</div>
            </div>
            <div class="collapse">
                <svg class="ico" width="13" height="7" viewBox="0 0 13 7"><path d="M.5 6.500l6-6 6 6" fill="none" stroke="#666"/></svg>
            </div>
        </div>`;
    }

    override render() {
        const tabs = ['Insertion', 'Mise en page', 'Formules', 'Données', 'Révision', 'Affichage', 'Aide'];
        return html`<div class="app">
            <div class="titlebar">
                <div class="qat">
                    ${saveIcon}
                    <span></span>
                    ${undoIcon('#fff')}
                    <span class="wcaret">${caret}</span>
                    ${redoIcon('#5f9c7c')}
                    <span>${caret}</span>
                    <div class="custom"></div>
                </div>
                <div class="title">Autorisations télescopiques.xlsx  -  Excel</div>
                <div class="win">
                    <div class="login">Connexion</div>
                    <div class="wbtn">${restore}</div>
                    <div class="wbtn">${minimize}</div>
                    <div class="wbtn">${maximize}</div>
                    <div class="wbtn">${closeIcon}</div>
                </div>
            </div>
            <div class="tabs">
                <div class="tab">Fichier</div>
                <div class="tab on">Accueil</div>
                ${tabs.map((t) => html`<div class="tab">${t}</div>`)}
                <div class="tell">${bulb}<span>Rechercher des outils adaptés</span></div>
                <div class="feedback">${comment}</div>
            </div>
            ${this.ribbon()}
            <div class="fbar">
                <div class="namebox"><span>I27</span>${drop}</div>
                <div class="grip"><i></i><i></i><i></i></div>
                <div class="fbtns">${cross}${check}<span class="fx">fx</span></div>
                <div class="finput"></div>
            </div>
            <div class="main">
                ${this.sheet()}
                <div class="vscroll">
                    <div class="sbtn"><div class="tri u"></div></div>
                    <div class="vthumb"></div>
                    <div class="sbtn down"><div class="tri d"></div></div>
                </div>
            </div>
            <div class="tabbar">
                <div class="nav"><div class="tri l"></div><div class="tri r"></div></div>
                <div class="sheet-tab">Autorisations télescopiques</div>
                <div class="add">${plusCircle}</div>
                <div class="grip h"><i></i><i></i><i></i></div>
                <div class="hscroll">
                    <div class="sbtn"><div class="tri l"></div></div>
                    <div class="hthumb"></div>
                    <div class="htrack"></div>
                    <div class="sbtn"><div class="tri r"></div></div>
                </div>
            </div>
            <div class="status">
                <div class="ready">Prêt</div>
                <div class="acc">${a11y}<span>Accessibilité : vérification terminée</span></div>
                <div class="views">
                    <div class="view on">${normalView}</div>
                    <div class="view">${pageView}</div>
                    <div class="view">${breakView}</div>
                    <div class="zoom-sign"></div>
                    <div class="slider"></div>
                    <div class="zoom-plus">+</div>
                    <div class="pct">100 %</div>
                </div>
            </div>
        </div>`;
    }
}
